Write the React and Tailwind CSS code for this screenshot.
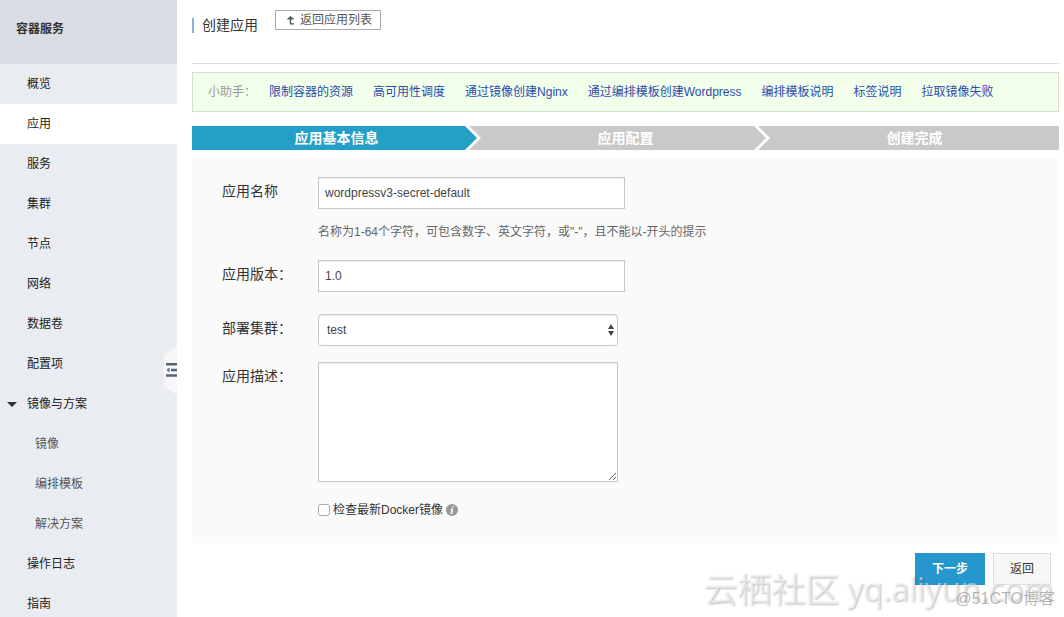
import { useState } from 'react';
import clsx from 'clsx';

const menu = [
    { label: '概览' },
    { label: '应用', active: true },
    { label: '服务' },
    { label: '集群' },
    { label: '节点' },
    { label: '网络' },
    { label: '数据卷' },
    { label: '配置项' },
    { label: '镜像与方案', open: true },
    { label: '镜像', sub: true },
    { label: '编排模板', sub: true },
    { label: '解决方案', sub: true },
    { label: '操作日志' },
    { label: '指南' },
];

const helpLinks = [
    '限制容器的资源',
    '高可用性调度',
    '通过镜像创建Nginx',
    '通过编排模板创建Wordpress',
    '编排模板说明',
    '标签说明',
    '拉取镜像失败',
];

const steps = ['应用基本信息', '应用配置', '创建完成'];

function Sidebar() {
    return (
        <aside className="relative w-[177px] shrink-0 overflow-hidden bg-[#e9edf2]">
            <div className="h-16 bg-[#d9dde4] px-4 pt-[19px] leading-5 font-bold text-[#333]">容器服务</div>
            <nav>
                {menu.map(item => (
                    <a
                        key={item.label}
                        href="#"
                        className={clsx(
                            'relative flex h-10 items-center',
                            item.sub ? 'pl-[35px] text-[#555]' : 'pl-[27px] text-[#222]',
                            item.active && 'bg-white'
                        )}
                    >
                        {item.open && (
                            <svg className="absolute left-[7px]" width="10" height="5" viewBox="0 0 10 5">
                                <path d="M0 0h10L5 5z" fill="#333" />
                            </svg>
                        )}
                        {item.label}
                    </a>
                ))}
            </nav>
            <button aria-label="收起菜单" className="absolute top-[346px] right-0">
                <svg width="13" height="49" viewBox="0 0 13 49">
                    <path d="M0 9L13 0v49L0 40z" fill="#f7f7f7" />
                    <path d="M2 17h11v2.500H2zM7 22.700h6v2.500H7zM2 28.200h11v2.500H2zM2.500 24l3-2.500v5z" fill="#546478" />
                </svg>
            </button>
        </aside>
    );
}

function Steps() {
    return (
        <ol className="mt-[14px] grid grid-cols-3 text-sm leading-6 font-bold text-white">
            {steps.map((step, i) => (
                <li key={step} className={clsx('relative h-6 text-center', i === 0 ? 'bg-[#249fc8]' : 'bg-[#c9c9c9]')}>
                    {step}
                    {i < steps.length - 1 && (
                        <svg className="absolute top-0 right-0" width="16" height="24" viewBox="0 0 16 24">
                            <path d="M0 0h16v24H0z" fill="#c9c9c9" />
                            <path d="M0 0h4l12 12L4 24H0z" fill="#fff" />
                            <path d="M0 0l12 12L0 24z" fill={i === 0 ? '#249fc8' : '#c9c9c9'} />
                        </svg>
                    )}
                </li>
            ))}
        </ol>
    );
}

function Row({ id, label, children }) {
    return (
        <div className="flex items-start">
            <label htmlFor={id} className="w-24 shrink-0 pt-[2px] text-sm leading-6 text-[#333]">{label}</label>
            <div>{children}</div>
        </div>
    );
}

const inputClass = 'block h-8 w-[307px] border border-[#c8c8c8] bg-white px-[6px] text-[#444] shadow-[inset_0_1px_1px_rgba(0,0,0,0.07)] outline-none';

export default function App() {
    const [name, setName] = useState('wordpressv3-secret-default');
    const [version, setVersion] = useState('1.0');
    const [desc, setDesc] = useState('');

    return (
        <div className="relative flex h-screen overflow-hidden bg-white font-['Liberation_Sans','Noto_Sans_CJK_SC',sans-serif] text-xs">
            <Sidebar />

            <main className="min-w-0 flex-1 pr-[5px] pl-[15px]">
                <header className="flex h-16 items-start border-b border-[#ddd]">
                    <h1 className="mt-[18px] h-[15px] border-l-2 border-[#88b0da] pl-2 text-sm leading-[15px] text-[#333]">创建应用</h1>
                    <button className="mt-[10px] ml-[17px] flex h-5 items-center gap-[5px] border border-[#aaa] px-2 pl-[10px] text-[#555]">
                        <svg width="9" height="9" viewBox="0 0 9 9" fill="#555">
                            <path d="M4.500 0L8.500 3.500H5.200v3.800H8v1.200H3.800V3.500H.500z" />
                        </svg>
                        返回应用列表
                    </button>
                </header>

                <div className="mt-2 flex h-10 items-center gap-5 border border-[#d8dcd5] bg-[#f1ffeb] pl-[15px] whitespace-nowrap text-[#2c4cac]">
                    <span className="-mr-[7px] text-[#999]">小助手：</span>
                    {helpLinks.map(link => <a key={link} href="#">{link}</a>)}
                </div>

                <Steps />

                <form className="mt-2 bg-[#fafafa] px-[30px] pt-[19px] pb-[23px]" onSubmit={e => e.preventDefault()}>
                    <Row id="name" label="应用名称">
                        <input id="name" value={name} onChange={e => setName(e.target.value)} className={inputClass} />
                        <p className="mt-[13px] mb-[18px] leading-5 text-[#666]">名称为1-64个字符，可包含数字、英文字符，或"-"，且不能以-开头的提示</p>
                    </Row>
                    <Row id="version" label="应用版本：">
                        <input id="version" value={version} onChange={e => setVersion(e.target.value)} className={inputClass} />
                    </Row>
                    <div className="mt-[22px]">
                        <Row id="cluster" label="部署集群：">
                            <div className="relative w-[300px]">
                                <select id="cluster" className="block h-8 w-full appearance-none rounded border border-[#c8c8c8] bg-white px-2 text-[#444] shadow-[inset_0_1px_1px_rgba(0,0,0,0.07)]">
                                    <option>test</option>
                                </select>
                                <svg className="pointer-events-none absolute top-[10px] right-[4px]" width="6" height="12" viewBox="0 0 6 12" fill="#444">
                                    <path d="M0 5L3 0l3 5zM0 7h6l-3 5z" />
                                </svg>
                            </div>
                        </Row>
                    </div>
                    <div className="mt-4">
                        <Row id="desc" label="应用描述：">
                            <textarea
                                id="desc"
                                value={desc}
                                onChange={e => setDesc(e.target.value)}
                                className="block h-[120px] w-[300px] border border-[#c8c8c8] bg-white p-[6px] shadow-[inset_0_1px_1px_rgba(0,0,0,0.07)]"
                            />
                            <div className="mt-[18px] flex h-5 items-center text-[#333]">
                                <input id="latest" type="checkbox" className="mr-[3px] h-3 w-3 appearance-none rounded-[3px] border border-[#aaa] bg-white checked:bg-[#249fc8]" />
                                <label htmlFor="latest">检查最新Docker镜像</label>
                                <svg className="ml-[3px]" width="12" height="12" viewBox="0 0 12 12">
                                    <circle cx="6" cy="6" r="6" fill="#999" />
                                    <path d="M6.300 2h1.500l-.3 1.500H6zM5.200 4.500h2L6.300 9h.6l-.2.800H4.500L5.300 5.300h-.500z" fill="#fff" />
                                </svg>
                            </div>
                        </Row>
                    </div>
                </form>

                <div className="mt-[10px] flex justify-end gap-2 pr-2">
                    <button className="h-8 w-[70px] bg-[#2597cd] font-bold text-white">下一步</button>
                    <button className="h-8 w-[58px] border border-[#ddd] bg-[#f7f7f7] text-[#333]">返回</button>
                </div>
            </main>

            <div className="pointer-events-none absolute right-[11px] bottom-1 flex items-center gap-2 font-['Open_Sans','Noto_Sans_CJK_SC',sans-serif] leading-[48px] whitespace-nowrap text-white/50 [text-shadow:1px_1px_2px_rgba(0,0,0,0.25)]">
                <span className="text-[34px]">云栖社区</span>
                <span className="text-[32px]">yq.aliyun.com</span>
            </div>
            <div className="pointer-events-none absolute right-[9px] bottom-[6px] text-base leading-6 text-[#999]/70">@51CTO博客</div>
        </div>
    );
}
